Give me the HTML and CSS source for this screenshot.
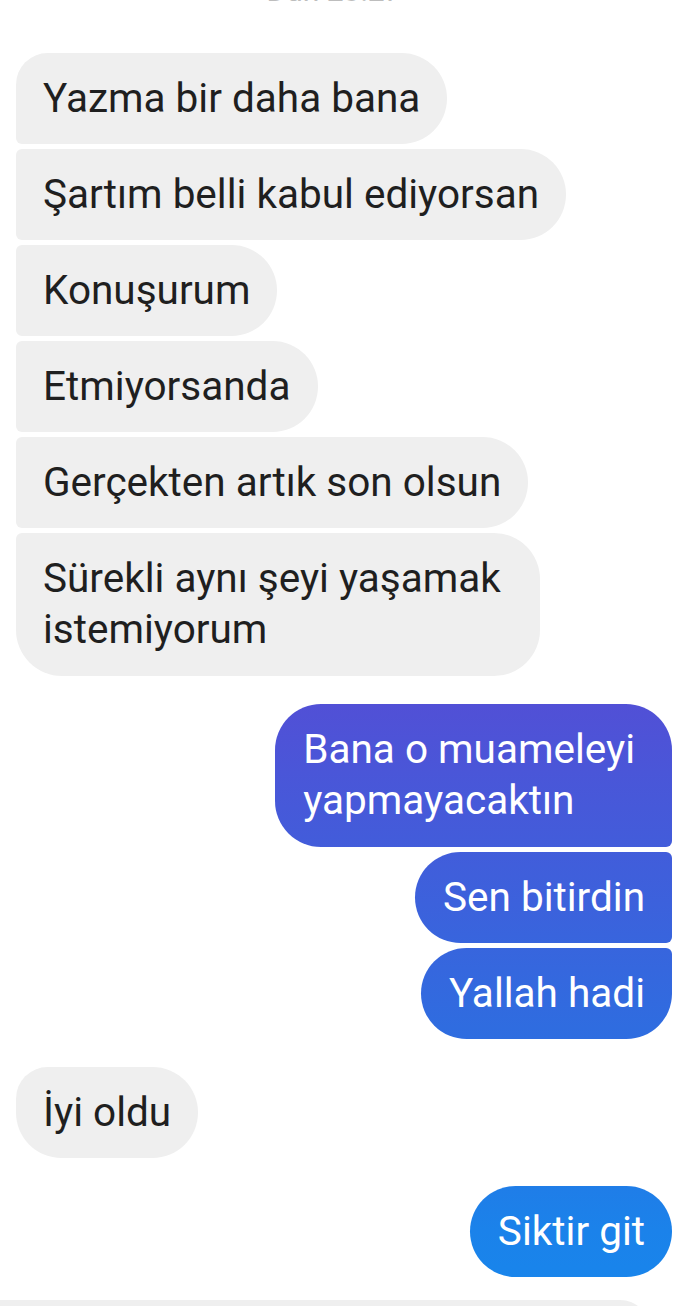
FILE: index.html
```html
<!DOCTYPE html>
<html lang="tr">
<head>
<meta charset="utf-8">
<title>Sohbet</title>
<link rel="stylesheet" href="styles.css">
</head>
<body>
<div class="chat">
  <div class="stamp">Dün 23:27</div>

  <div class="group in first">
    <div class="bubble">Yazma bir daha bana</div>
    <div class="bubble">Şartım belli kabul ediyorsan</div>
    <div class="bubble">Konuşurum</div>
    <div class="bubble">Etmiyorsanda</div>
    <div class="bubble">Gerçekten artık son olsun</div>
    <div class="bubble wrapped">Sürekli aynı şeyi yaşamak<br>istemiyorum</div>
  </div>

  <div class="group out">
    <div class="bubble wrapped">Bana o muameleyi<br>yapmayacaktın</div>
    <div class="bubble">Sen bitirdin</div>
    <div class="bubble">Yallah hadi</div>
  </div>

  <div class="group in">
    <div class="bubble">İyi oldu</div>
  </div>

  <div class="group out">
    <div class="bubble">Siktir git</div>
  </div>

  <div class="composer"></div>
</div>
</body>
</html>
```

FILE: styles.css
```css
html, body {
  margin: 0;
  padding: 0;
  background: #ffffff;
  overflow: hidden;
}

body {
  width: 690px;
  height: 1306px;
  font-family: Roboto, "Noto Sans", "Liberation Sans", sans-serif;
}

.chat {
  display: flex;
  flex-direction: column;
  padding: 0 18px 0 16px;
}

.stamp {
  margin-top: -25px;
  height: 31px;
  text-align: center;
  padding-right: 20px;
  font-size: 30px;
  line-height: 31px;
  color: #bdbdbd;
}

.group {
  display: flex;
  flex-direction: column;
  gap: 5px;
  margin-top: 28px;
}

.group.first {
  margin-top: 47px;
}

.in {
  align-items: flex-start;
}

.out {
  align-items: flex-end;
}

.bubble {
  font-size: 40.5px;
  line-height: 51px;
  padding: 20px 27px 20px 27px;
  border-radius: 6px 46px 46px 6px;
}

.in .bubble {
  background: #efefef;
  color: #1f1f1f;
}

.out .bubble {
  color: #ffffff;
  padding: 20px 27px 20px 28px;
  border-radius: 46px 6px 6px 46px;
  background-image: linear-gradient(to bottom, #5a45d4 520px, #5150d6 704px, #2e6de0 1038px, #1b82ea 1230px, #1786ec 1306px);
  background-attachment: fixed;
}

.in .bubble.wrapped {
  padding: 20px 39px 21px 27px;
}

.out .bubble.wrapped {
  padding: 20px 37px 21px 28px;
}

.in .bubble:first-child {
  border-top-left-radius: 32px;
}

.in .bubble:last-child {
  border-bottom-left-radius: 46px;
}

.out .bubble:first-child {
  border-top-right-radius: 46px;
}

.out .bubble:last-child {
  border-bottom-right-radius: 46px;
}

.composer {
  margin-top: 23px;
  margin-left: -16px;
  width: 650px;
  height: 60px;
  background: #efefef;
  border-radius: 0 30px 0 0;
}
```
